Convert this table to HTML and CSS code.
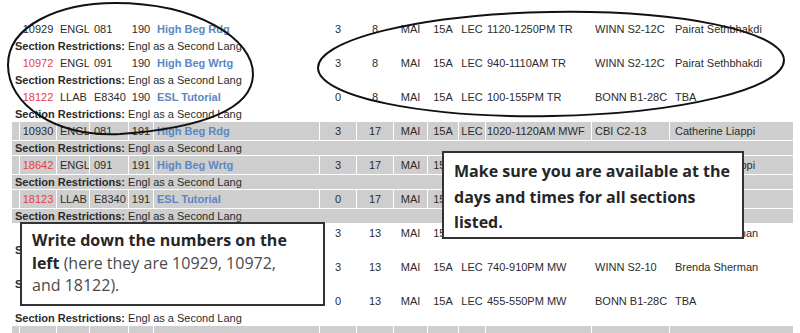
FILE: index.html
```html
<!DOCTYPE html>
<html>
<head>
<meta charset="utf-8">
<link rel="stylesheet" href="styles.css">
</head>
<body>
<div class="page">
  <div class="sched">
    <div class="row">
      <span></span><span class="num">10929</span><span>ENGL</span><span class="crs">081</span><span class="num">190</span><span class="title">High Beg Rdg</span>
      <span class="c">3</span><span class="c">8</span><span class="c">MAI</span><span class="c">15A</span><span class="c">LEC</span><span class="time">1120-1250PM TR</span><span>WINN S2-12C</span><span class="inst">Pairat Sethbhakdi</span>
    </div>
    <div class="restr"><b>Section Restrictions:</b> Engl as a Second Lang</div>
    <div class="row">
      <span></span><span class="num red">10972</span><span>ENGL</span><span class="crs">091</span><span class="num">190</span><span class="title">High Beg Wrtg</span>
      <span class="c">3</span><span class="c">8</span><span class="c">MAI</span><span class="c">15A</span><span class="c">LEC</span><span class="time">940-1110AM TR</span><span>WINN S2-12C</span><span class="inst">Pairat Sethbhakdi</span>
    </div>
    <div class="restr"><b>Section Restrictions:</b> Engl as a Second Lang</div>
    <div class="row">
      <span></span><span class="num red">18122</span><span>LLAB</span><span class="crs">E8340</span><span class="num">190</span><span class="title">ESL Tutorial</span>
      <span class="c">0</span><span class="c">8</span><span class="c">MAI</span><span class="c">15A</span><span class="c">LEC</span><span class="time">100-155PM TR</span><span>BONN B1-28C</span><span class="inst">TBA</span>
    </div>
    <div class="restr"><b>Section Restrictions:</b> Engl as a Second Lang</div>

    <div class="row grey">
      <span></span><span class="num">10930</span><span>ENGL</span><span class="crs">081</span><span class="num">191</span><span class="title">High Beg Rdg</span>
      <span class="c">3</span><span class="c">17</span><span class="c">MAI</span><span class="c">15A</span><span class="c">LEC</span><span class="time">1020-1120AM MWF</span><span>CBI C2-13</span><span class="inst">Catherine Liappi</span>
    </div>
    <div class="restr grey"><b>Section Restrictions:</b> Engl as a Second Lang</div>
    <div class="row grey">
      <span></span><span class="num red">18642</span><span>ENGL</span><span class="crs">091</span><span class="num">191</span><span class="title">High Beg Wrtg</span>
      <span class="c">3</span><span class="c">17</span><span class="c">MAI</span><span class="c">15A</span><span class="c"></span><span class="time"></span><span></span><span class="inst">Catherine Liappi</span>
    </div>
    <div class="restr grey"><b>Section Restrictions:</b> Engl as a Second Lang</div>
    <div class="row grey">
      <span></span><span class="num red">18123</span><span>LLAB</span><span class="crs">E8340</span><span class="num">191</span><span class="title">ESL Tutorial</span>
      <span class="c">0</span><span class="c">17</span><span class="c">MAI</span><span class="c">15A</span><span class="c"></span><span class="time"></span><span></span><span class="inst"></span>
    </div>
    <div class="restr grey"><b>Section Restrictions:</b> Engl as a Second Lang</div>

    <div class="row">
      <span></span><span class="num"></span><span></span><span class="crs"></span><span class="num"></span><span class="title"></span>
      <span class="c">3</span><span class="c">13</span><span class="c">MAI</span><span class="c">15A</span><span class="c"></span><span class="time"></span><span></span><span class="inst">Brenda Sherman</span>
    </div>
    <div class="restr"><b>Section Restrictions:</b> Engl as a Second Lang</div>
    <div class="row">
      <span></span><span class="num"></span><span></span><span class="crs"></span><span class="num"></span><span class="title"></span>
      <span class="c">3</span><span class="c">13</span><span class="c">MAI</span><span class="c">15A</span><span class="c">LEC</span><span class="time">740-910PM MW</span><span>WINN S2-10</span><span class="inst">Brenda Sherman</span>
    </div>
    <div class="restr"><b>Section Restrictions:</b> Engl as a Second Lang</div>
    <div class="row">
      <span></span><span class="num red">18124</span><span>LLAB</span><span class="crs">E8340</span><span class="num">192</span><span class="title">ESL Tutorial</span>
      <span class="c">0</span><span class="c">13</span><span class="c">MAI</span><span class="c">15A</span><span class="c">LEC</span><span class="time">455-550PM MW</span><span>BONN B1-28C</span><span class="inst">TBA</span>
    </div>
    <div class="restr"><b>Section Restrictions:</b> Engl as a Second Lang</div>

    <div class="row grey">
      <span></span><span></span><span></span><span></span><span></span><span></span>
      <span></span><span></span><span></span><span></span><span></span><span></span><span></span><span></span>
    </div>
  </div>

  <svg class="marks" width="800" height="333" viewBox="0 0 800 333">
    <path d="M 8 65 C 8 25 60 3 115 3 C 195 3 254 38 253 75 C 252 108 205 128 120 134 C 55 137 8 105 8 65 Z" />
    <ellipse cx="551" cy="64" rx="233" ry="52" transform="rotate(-1 551 64)" />
  </svg>

  <div class="note note-right">
    Make sure you are available at the<br>days and times for all sections<br>listed.
  </div>
  <div class="note note-left">
    <b>Write down the numbers on the<br>left</b> (here they are 10929, 10972,<br>and 18122).
  </div>
</div>
</body>
</html>
```

FILE: styles.css
```css
* { box-sizing: border-box; }
html, body { margin: 0; padding: 0; background: #fff; }
body { width: 800px; height: 333px; overflow: hidden; }

.page {
  position: relative;
  width: 800px;
  height: 333px;
  overflow: hidden;
  font-family: "Liberation Sans", Arial, sans-serif;
  font-size: 11px;
  color: #2c2c2c;
}

.sched {
  display: flex;
  flex-direction: column;
  gap: 1px;
  padding: 20px 0 0 12px;
}

.row {
  display: grid;
  grid-template-columns: 7px 36px 32px 38px 24px 165px 36px 36px 33px 30px 26px 105px 77px 123px;
  column-gap: 1px;
  width: 781px;
  height: 18px;
  line-height: 18px;
}
.row > span {
  padding: 0 2px 0 3px;
  white-space: nowrap;
  overflow: hidden;
}
.row.grey > span { background: #cecece; }

.row .num, .row .c { text-align: center; padding: 0; }
.row .crs { padding-left: 4px; }
.row .title { font-weight: bold; color: #5b87c2; }
.row .time { padding-left: 1px; }
.row .inst { padding-left: 5px; }
.red { color: #e5413f; }

.restr {
  width: 781px;
  height: 14px;
  line-height: 14px;
  padding-left: 3px;
  white-space: nowrap;
}
.restr b { color: #2a2a2a; }
.restr.grey { background: #cecece; }

.marks {
  position: absolute;
  left: 0;
  top: 0;
  fill: none;
  stroke: #111;
  stroke-width: 2;
  pointer-events: none;
}

.note {
  position: absolute;
  background: #fff;
  border: 2px solid #333;
  font-family: "Open Sans", Lato, sans-serif;
  color: #262626;
  white-space: nowrap;
}
.note-right {
  left: 442px;
  top: 151px;
  width: 302px;
  height: 88px;
  padding: 6px 6px 0 10px;
  font-size: 16px;
  font-weight: bold;
  line-height: 25.5px;
}
.note-left {
  left: 20px;
  top: 222px;
  width: 305px;
  height: 84px;
  padding: 5px 4px 0 10px;
  font-size: 16px;
  line-height: 22.5px;
  color: #4a4a4a;
}
.note-left b { color: #262626; }
```
